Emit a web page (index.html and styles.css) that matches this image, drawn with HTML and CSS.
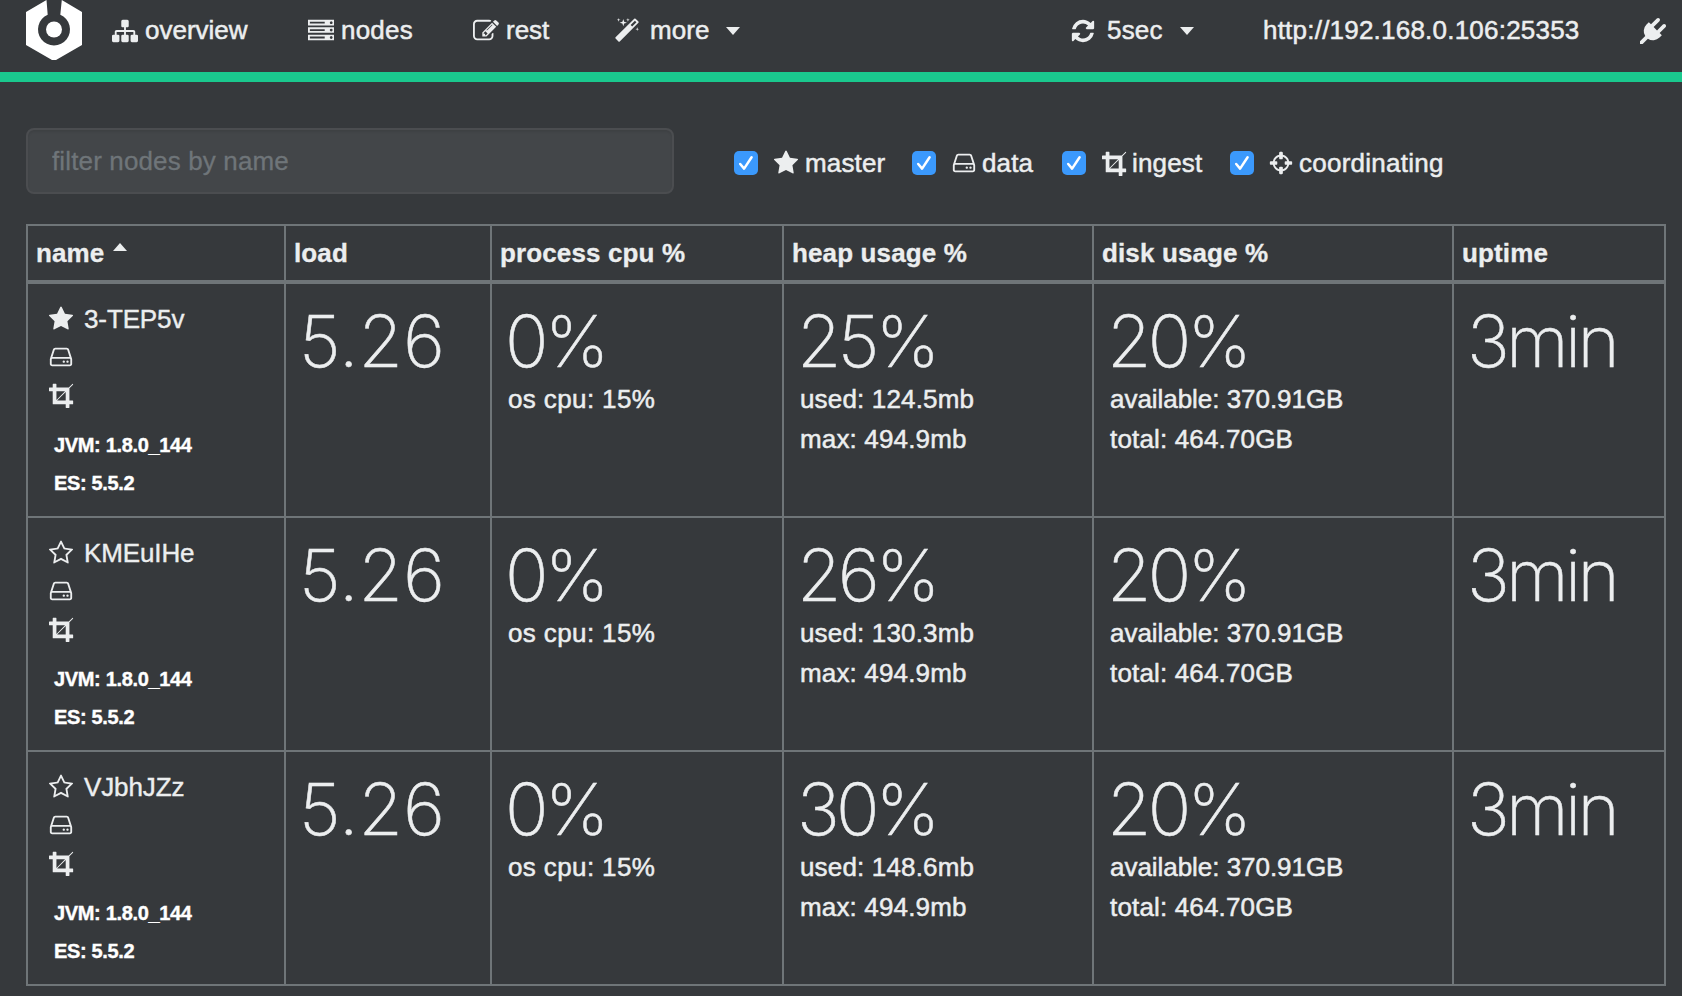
FILE: index.html
```html
<!DOCTYPE html>
<html lang="en">
<head>
<meta charset="utf-8">
<title>nodes</title>
<link rel="stylesheet" href="styles.css">
</head>
<body>
<svg class="sprite" width="0" height="0" aria-hidden="true">
  <symbol id="star" viewBox="0 0 1792 1792"><path d="M1728 647q0 22-26 48l-363 354 86 500q1 7 1 20 0 21-10.500 35.500t-30.500 14.500q-19 0-40-12l-449-236-449 236q-22 12-40 12-21 0-31.500-14.500t-10.500-35.500q0-6 2-20l86-500-364-354q-25-27-25-48 0-37 56-46l502-73 225-455q19-41 49-41t49 41l225 455 502 73q56 9 56 46z"/></symbol>
  <symbol id="star-o" viewBox="0 0 1792 1792"><path d="M1201 1004l306-297-422-62-189-382-189 382-422 62 306 297-73 421 378-199 377 199zm527-357q0 22-26 48l-363 354 86 500q1 7 1 20 0 50-41 50-19 0-40-12l-449-236-449 236q-22 12-40 12-21 0-31.500-14.500t-10.500-35.500q0-6 2-20l86-500-364-354q-25-27-25-48 0-37 56-46l502-73 225-455q19-41 49-41t49 41l225 455 502 73q56 9 56 46z"/></symbol>
  <symbol id="refresh" viewBox="0 0 1792 1792"><path d="M1639 1056q0 5-1 7-64 268-268 434.500t-478 166.500q-146 0-282.500-55t-243.500-157l-129 129q-19 19-45 19t-45-19-19-45v-448q0-26 19-45t45-19h448q26 0 45 19t19 45-19 45l-137 137q71 66 161 102t187 36q134 0 250-65t186-179q11-17 53-117 8-23 30-23h192q13 0 22.500 9.500t9.500 22.500zm25-800v448q0 26-19 45t-45 19h-448q-26 0-45-19t-19-45 19-45l138-138q-148-137-349-137-134 0-250 65t-186 179q-11 17-53 117-8 23-30 23h-199q-13 0-22.500-9.500t-9.500-22.500v-7q65-268 270-434.500t480-166.500q146 0 284 55.500t245 156.500l130-129q19-19 45-19t45 19 19 45z"/></symbol>
  <symbol id="magic" viewBox="0 0 1792 1792"><path d="M1254 581l293-293-107-107-293 293zm447-293q0 27-18 45l-1286 1286q-18 18-45 18t-45-18l-198-198q-18-18-18-45t18-45l1286-1286q18-18 45-18t45 18l198 198q18 18 18 45zm-1351-190l98 30-98 30-30 98-30-98-98-30 98-30 30-98zm350 162l196 60-196 60-60 196-60-196-196-60 196-60 60-196zm930 478l98 30-98 30-30 98-30-98-98-30 98-30 30-98zm-640-640l98 30-98 30-30 98-30-98-98-30 98-30 30-98z"/></symbol>
  <symbol id="sitemap" viewBox="0 0 1792 1792"><path d="M1792 1248v320q0 40-28 68t-68 28h-320q-40 0-68-28t-28-68v-320q0-40 28-68t68-28h96v-192h-512v192h96q40 0 68 28t28 68v320q0 40-28 68t-68 28h-320q-40 0-68-28t-28-68v-320q0-40 28-68t68-28h96v-192h-512v192h96q40 0 68 28t28 68v320q0 40-28 68t-68 28h-320q-40 0-68-28t-28-68v-320q0-40 28-68t68-28h96v-192q0-52 38-90t90-38h512v-192h-96q-40 0-68-28t-28-68v-320q0-40 28-68t68-28h320q40 0 68 28t28 68v320q0 40-28 68t-68 28h-96v192h512q52 0 90 38t38 90v192h96q40 0 68 28t28 68z"/></symbol>
  <symbol id="server" viewBox="0 0 1792 1792"><path d="M128 1408h1024v-128h-1024v128zm0-512h1024v-128h-1024v128zm1568 448q0-40-28-68t-68-28-68 28-28 68 28 68 68 28 68-28 28-68zm-1568-960h1024v-128h-1024v128zm1568 448q0-40-28-68t-68-28-68 28-28 68 28 68 68 28 68-28 28-68zm0-512q0-40-28-68t-68-28-68 28-28 68 28 68 68 28 68-28 28-68zm96 832v384h-1792v-384h1792zm0-512v384h-1792v-384h1792zm0-512v384h-1792v-384h1792z"/></symbol>
  <symbol id="edit" viewBox="0 0 1792 1792"><path d="M888 1184l116-116-152-152-116 116v56h96v96h56zm440-720q-16-16-33 1l-350 350q-17 17-1 33t33-1l350-350q17-17 1-33zm80 594v190q0 119-84.500 203.500t-203.500 84.500h-832q-119 0-203.500-84.500t-84.500-203.500v-832q0-119 84.500-203.500t203.500-84.500h832q63 0 117 25 15 7 18 23 3 17-9 29l-49 49q-14 14-32 8-23-6-45-6h-832q-66 0-113 47t-47 113v832q0 66 47 113t113 47h832q66 0 113-47t47-113v-126q0-13 9-22l64-64q15-15 35-7t20 29zm-96-738l288 288-672 672h-288v-288zm444 132l-92 92-288-288 92-92q28-28 68-28t68 28l152 152q28 28 28 68t-28 68z"/></symbol>
  <symbol id="plug" viewBox="0 0 1792 1792"><path d="M1755 453q37 38 37 90.500t-37 90.500l-401 400 150 150-160 160q-163 163-389.500 186.500t-411.500-100.500l-362 362h-181v-181l362-362q-124-185-100.500-411.500t186.500-389.500l160-160 150 150 400-401q38-37 91-37t90 37 37 90.500-37 90.500l-400 401 234 234 401-400q38-37 91-37t90 37z"/></symbol>
  <symbol id="crop" viewBox="0 0 1792 1792"><path d="M557 1280h595v-595zm-45-45l595-595h-595v595zm1152 77v192q0 14-9 23t-23 9h-224v224q0 14-9 23t-23 9h-192q-14 0-23-9t-9-23v-224h-864q-14 0-23-9t-9-23v-864h-224q-14 0-23-9t-9-23v-192q0-14 9-23t23-9h224v-224q0-14 9-23t23-9h192q14 0 23 9t9 23v224h851l246-247q10-9 23-9t23 9q9 10 9 23t-9 23l-247 246v851h224q14 0 23 9t9 23z"/></symbol>
  <symbol id="hdd" viewBox="0 0 1792 1792"><path d="M1168 1216q0 33-23.500 56.500t-56.500 23.500-56.500-23.500-23.500-56.500 23.500-56.500 56.500-23.500 56.500 23.500 23.500 56.500zm256 0q0 33-23.500 56.500t-56.500 23.500-56.500-23.500-23.500-56.500 23.500-56.500 56.500-23.500 56.500 23.500 23.500 56.500zm112 160v-320q0-13-9.500-22.500t-22.500-9.500h-1216q-13 0-22.500 9.500t-9.500 22.500v320q0 13 9.500 22.500t22.500 9.500h1216q13 0 22.500-9.500t9.500-22.500zm-1230-480h1180l-157-482q-4-13-16-21.500t-26-8.500h-782q-14 0-26 8.500t-16 21.500zm1358 160v320q0 66-47 113t-113 47h-1216q-66 0-113-47t-47-113v-320q0-25 16-75l197-606q17-53 63-86t101-33h782q55 0 101 33t63 86l197 606q16 50 16 75z"/></symbol>
  <symbol id="cross" viewBox="0 0 1792 1792"><path d="M1325 1024h-109q-26 0-45-19t-19-45v-128q0-26 19-45t45-19h109q-32-108-112.500-188.500t-188.500-112.500v109q0 26-19 45t-45 19h-128q-26 0-45-19t-19-45v-109q-108 32-188.500 112.500t-112.500 188.500h109q26 0 45 19t19 45v128q0 26-19 45t-45 19h-109q32 108 112.500 188.500t188.500 112.500v-109q0-26 19-45t45-19h128q26 0 45 19t19 45v109q108-32 188.500-112.500t112.500-188.500zm339-192v128q0 26-19 45t-45 19h-143q-37 161-154.500 278.500t-278.500 154.500v143q0 26-19 45t-45 19h-128q-26 0-45-19t-19-45v-143q-161-37-278.500-154.500t-154.500-278.500h-143q-26 0-45-19t-19-45v-128q0-26 19-45t45-19h143q37-161 154.500-278.500t278.500-154.500v-143q0-26 19-45t45-19h128q26 0 45 19t19 45v143q161 37 278.500 154.500t154.500 278.500h143q26 0 45 19t19 45z"/></symbol>
  <symbol id="check" viewBox="0 0 24 24"><path d="M6.200 13l3.900 4.600L17.600 6.200" fill="none" stroke="#fff" stroke-width="2.500" stroke-linecap="round" stroke-linejoin="round"/></symbol>
</svg>

<header class="navbar">
  <svg class="logo" viewBox="0 0 56 60"><path d="M20.500 0L0 12v33l26 15h4l26-15V12L35.800 0 34.300 14.800a16 16 0 1 1-12.600 0z" fill="#fff"/><circle cx="28" cy="29.500" r="8" fill="#fff"/></svg>
  <nav class="menu">
    <a class="item overview"><svg class="icon"><use href="#sitemap"/></svg><span>overview</span></a>
    <a class="item nodes"><svg class="icon"><use href="#server"/></svg><span>nodes</span></a>
    <a class="item rest"><svg class="icon"><use href="#edit"/></svg><span>rest</span></a>
    <a class="item more"><svg class="icon"><use href="#magic"/></svg><span>more</span><i class="caret"></i></a>
  </nav>
  <a class="item interval"><svg class="icon"><use href="#refresh"/></svg><span>5sec</span><i class="caret"></i></a>
  <a class="item host"><span>http://192.168.0.106:25353</span></a>
  <a class="item plug"><svg class="icon"><use href="#plug"/></svg></a>
</header>

<main class="content">
  <div class="filters">
    <input class="filter-input" type="text" placeholder="filter nodes by name">
    <label class="role role-master"><span class="checkbox"><svg><use href="#check"/></svg></span><svg class="icon"><use href="#star"/></svg><span class="role-name">master</span></label>
    <label class="role role-data"><span class="checkbox"><svg><use href="#check"/></svg></span><svg class="icon"><use href="#hdd"/></svg><span class="role-name">data</span></label>
    <label class="role role-ingest"><span class="checkbox"><svg><use href="#check"/></svg></span><svg class="icon"><use href="#crop"/></svg><span class="role-name">ingest</span></label>
    <label class="role role-coord"><span class="checkbox"><svg><use href="#check"/></svg></span><svg class="icon"><use href="#cross"/></svg><span class="role-name">coordinating</span></label>
  </div>

  <table class="table">
    <colgroup><col class="c-name"><col class="c-load"><col class="c-cpu"><col class="c-heap"><col class="c-disk"><col class="c-uptime"></colgroup>
    <thead>
      <tr><th>name<i class="caret up"></i></th><th>load</th><th>process cpu %</th><th>heap usage %</th><th>disk usage %</th><th>uptime</th></tr>
    </thead>
    <tbody>
      <tr>
        <td class="node"><div class="line first"><svg class="icon"><use href="#star"/></svg><span class="node-name">3-TEP5v</span></div><div class="line"><svg class="icon"><use href="#hdd"/></svg></div><div class="line last"><svg class="icon"><use href="#crop"/></svg></div><div class="version jvm">JVM: 1.8.0_144</div><div class="version">ES: 5.5.2</div></td>
        <td><div class="big load">5.26</div></td>
        <td><div class="big">0%</div><div class="sub s-cpu">os cpu: 15%</div></td>
        <td><div class="big pct">25%</div><div class="sub">used: 124.5mb</div><div class="sub">max: 494.9mb</div></td>
        <td><div class="big pct">20%</div><div class="sub s-avail">available: 370.91GB</div><div class="sub">total: 464.70GB</div></td>
        <td><div class="big pct">3min</div></td>
      </tr>
      <tr>
        <td class="node"><div class="line first"><svg class="icon"><use href="#star-o"/></svg><span class="node-name">KMEuIHe</span></div><div class="line"><svg class="icon"><use href="#hdd"/></svg></div><div class="line last"><svg class="icon"><use href="#crop"/></svg></div><div class="version jvm">JVM: 1.8.0_144</div><div class="version">ES: 5.5.2</div></td>
        <td><div class="big load">5.26</div></td>
        <td><div class="big">0%</div><div class="sub s-cpu">os cpu: 15%</div></td>
        <td><div class="big pct">26%</div><div class="sub">used: 130.3mb</div><div class="sub">max: 494.9mb</div></td>
        <td><div class="big pct">20%</div><div class="sub s-avail">available: 370.91GB</div><div class="sub">total: 464.70GB</div></td>
        <td><div class="big pct">3min</div></td>
      </tr>
      <tr>
        <td class="node"><div class="line first"><svg class="icon"><use href="#star-o"/></svg><span class="node-name">VJbhJZz</span></div><div class="line"><svg class="icon"><use href="#hdd"/></svg></div><div class="line last"><svg class="icon"><use href="#crop"/></svg></div><div class="version jvm">JVM: 1.8.0_144</div><div class="version">ES: 5.5.2</div></td>
        <td><div class="big load">5.26</div></td>
        <td><div class="big">0%</div><div class="sub s-cpu">os cpu: 15%</div></td>
        <td><div class="big pct">30%</div><div class="sub">used: 148.6mb</div><div class="sub">max: 494.9mb</div></td>
        <td><div class="big pct">20%</div><div class="sub s-avail">available: 370.91GB</div><div class="sub">total: 464.70GB</div></td>
        <td><div class="big pct">3min</div></td>
      </tr>
    </tbody>
  </table>
</main>
</body>
</html>
```

FILE: styles.css
```css
* { box-sizing: border-box; }
html, body { margin: 0; height: 996px; overflow: hidden; }
body {
  background: #36393c;
  color: #eceeef;
  font: 26px/40px "Liberation Sans", Arial, sans-serif;
}
.sprite { display: block; }
.icon { display: block; flex: none; width: 26px; height: 26px; fill: currentColor; }

.navbar {
  display: flex;
  align-items: flex-start;
  height: 82px;
  padding-left: 26px;
  border-bottom: 10px solid #1ac98e;
}
.logo { display: block; flex: none; width: 56px; height: 60px; }
.menu { display: flex; width: 988px; padding-left: 30px; }
.item { display: flex; align-items: center; height: 61px; white-space: nowrap; }
.item span { -webkit-text-stroke: 0.5px currentColor; line-height: 61px; padding-bottom: 1px; }
.overview { width: 196px; gap: 7px; }
.nodes { width: 165px; gap: 7px; letter-spacing: 0.2px; }
.rest { width: 141px; gap: 7px; }
.more { gap: 10px; letter-spacing: 0.1px; }
.more .caret { margin-left: 6px; }
.interval { width: 193px; gap: 11px; letter-spacing: 0.2px; }
.interval .caret { margin-left: 6px; }
.host { width: 376px; letter-spacing: 0.22px; }
.plug { padding-left: 1px; }
.caret {
  display: inline-block;
  border: solid transparent;
  border-width: 8px 7.500px 0;
  border-top-color: currentColor;
}
.caret.up {
  border-width: 0 7.500px 8px;
  border-bottom-color: currentColor;
  margin-left: 9px;
  vertical-align: 11px;
}

.content { padding: 46px 16px 0 26px; }
.filters { display: flex; height: 66px; }
.filter-input {
  width: 648px;
  height: 66px;
  padding: 0 24px;
  border: 2px solid #4b4d50;
  border-radius: 8px;
  background: #434649;
  box-shadow: inset 0 2px 2px rgba(0, 0, 0, 0.075);
  font: inherit;
  color: #eceeef;
  outline: none;
}
.filter-input::placeholder {
  color: #6f7579;
  opacity: 1;
  letter-spacing: 0.14px;
  -webkit-text-stroke: 0.3px #6f7579;
}
.role { display: flex; align-items: center; height: 70px; white-space: nowrap; }
.role-name { letter-spacing: 0.15px; -webkit-text-stroke: 0.5px currentColor; }
.checkbox {
  width: 24px;
  height: 24px;
  margin-right: 15px;
  border-radius: 5px;
  background: #3b99fc;
}
.checkbox svg { display: block; width: 24px; height: 24px; }
.role .icon { margin-right: 6px; }
.role-master { width: 178px; margin-left: 60px; }
.role-data { width: 150px; }
.role-data .icon { margin-right: 5px; }
.role-ingest { width: 168px; }
.role-ingest .icon { margin: 0 4px 0 1px; }
.role-coord .checkbox { margin-right: 14px; }
.role-coord .icon { margin-right: 5px; }
.role-coord .role-name { letter-spacing: 0.25px; }

.table {
  width: 1640px;
  margin-top: 30px;
  table-layout: fixed;
  border: solid #6f7578;
  border-width: 2px 0 0 2px;
  border-collapse: separate;
  border-spacing: 0;
}
.c-name { width: 258px; }
.c-load { width: 206px; }
.c-cpu { width: 292px; }
.c-heap { width: 310px; }
.c-disk { width: 360px; }
.c-uptime { width: 212px; }
th, td { border: solid #6f7578; border-width: 0 2px 2px 0; text-align: left; white-space: nowrap; }
th {
  height: 58px;
  padding: 0 8px;
  border-bottom-width: 4px;
  font-weight: bold;
  letter-spacing: 0.13px;
  -webkit-text-stroke: 0.3px currentColor;
}
td { height: 234px; padding: 17px 16px 0; vertical-align: top; }
td.node { padding: 15px 20px 0; }
.line { display: flex; align-items: center; height: 38.500px; }
.line.first .icon { margin-top: 1px; }
.line.last { padding-left: 1px; }
.node-name {
  margin-left: 10px;
  padding-top: 1px;
  letter-spacing: -0.12px;
  -webkit-text-stroke: 0.4px currentColor;
}
.version {
  height: 38px;
  padding-left: 6px;
  color: #fff;
  font-size: 20px;
  font-weight: bold;
  line-height: 38px;
  letter-spacing: -0.34px;
  -webkit-text-stroke: 0.4px currentColor;
}
.jvm { margin-top: 11px; }
.big {
  height: 78px;
  margin-left: -3px;
  font: 200 72px/80px Inter, sans-serif;
  letter-spacing: -3.4px;
  -webkit-text-stroke: 0.5px currentColor;
}
.big.load { letter-spacing: 0; }
.big.pct { letter-spacing: -3.700px; }
.sub { letter-spacing: 0.16px; -webkit-text-stroke: 0.5px currentColor; }
.s-cpu { letter-spacing: 0.38px; }
.s-avail { letter-spacing: -0.04px; }
```
